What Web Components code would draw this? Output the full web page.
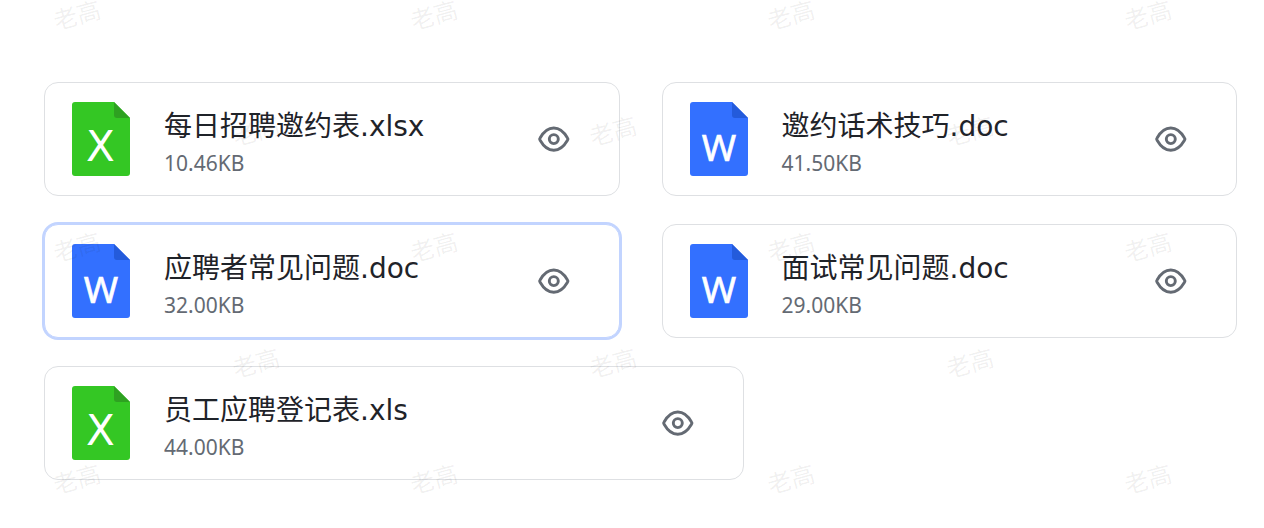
<!DOCTYPE html>
<html lang="zh-CN">
<head>
<meta charset="utf-8">
<meta name="viewport" content="width=device-width, initial-scale=1">
<title>招聘资料</title>
<style>
body { margin: 0; background: #fff; font-family: "Noto Sans", "Noto Sans CJK SC", sans-serif; color: #1f2329; }
</style>
</head>
<body>
<file-board>
  <file-row>
    <file-card name="每日招聘邀约表.xlsx" size="10.46KB" kind="sheet"></file-card>
    <file-card name="邀约话术技巧.doc" size="41.50KB" kind="word"></file-card>
  </file-row>
  <file-row>
    <file-card name="应聘者常见问题.doc" size="32.00KB" kind="word" selected></file-card>
    <file-card name="面试常见问题.doc" size="29.00KB" kind="word"></file-card>
  </file-row>
  <file-row single>
    <file-card name="员工应聘登记表.xls" size="44.00KB" kind="sheet"></file-card>
  </file-row>
</file-board>

<script>
class FileBoard extends HTMLElement {
  constructor() {
    super();
    this.attachShadow({ mode: "open" }).innerHTML = `
      <style>
        :host { display: block; position: relative; overflow: hidden; }
        main { display: flex; flex-direction: column; gap: 28px; padding: 82px 27px 48px 44px; }
      </style>
      <main><slot></slot></main>
      <water-mark text="老高"></water-mark>`;
  }
}

class FileRow extends HTMLElement {
  constructor() {
    super();
    this.attachShadow({ mode: "open" }).innerHTML = `
      <style>
        :host { display: grid; grid-template-columns: 1fr 1fr; gap: 42px; }
        :host([single]) { grid-template-columns: minmax(0, 700px); }
      </style>
      <slot></slot>`;
  }
}

class FileIcon extends HTMLElement {
  connectedCallback() {
    const sheet = this.getAttribute("kind") === "sheet";
    const fill = sheet ? "#34c724" : "#3370ff";
    const fold = sheet ? "#2ea121" : "#245bdb";
    this.attachShadow({ mode: "open" }).innerHTML = `
      <style>
        :host { display: block; flex: none; }
        svg { display: block; }
        text { font-family: "DejaVu Sans", sans-serif; fill: #fff; text-anchor: middle; }
        .word { font-family: "Noto Sans", sans-serif; stroke: #fff; stroke-width: 0.6; }
      </style>
      <svg width="58" height="74" viewBox="0 0 58 74" aria-hidden="true">
        <path d="M3 0H42L58 16V71a3 3 0 0 1-3 3H3a3 3 0 0 1-3-3V3a3 3 0 0 1 3-3Z" fill="${fill}"/>
        <path d="M42 0L58 16H45a3 3 0 0 1-3-3Z" fill="${fold}"/>
        ${sheet ? '<text x="28.5" y="59" font-size="42">X</text>' : '<text class="word" x="29" y="59" font-size="37">W</text>'}
      </svg>`;
  }
}

class FileCard extends HTMLElement {
  connectedCallback() {
    this.attachShadow({ mode: "open" }).innerHTML = `
      <style>
        :host { display: block; min-width: 0; }
        article { display: flex; align-items: center; gap: 34px; box-sizing: border-box; min-height: 114px;
          padding: 0 49px 0 27px; border: 1px solid #dee0e3; border-radius: 14px; background: #fff; }
        :host([selected]) article { border-color: #c2d4ff; box-shadow: 0 0 0 2px #c2d4ff; }
        .info { flex: 1; min-width: 0; padding-top: 2px; }
        h2 { margin: 0; font-family: "DejaVu Sans", "Noto Sans CJK SC", sans-serif; font-size: 28px; line-height: 46px; font-weight: 400; white-space: nowrap; overflow: hidden; text-overflow: ellipsis; }
        p { margin: 0; font-size: 21px; line-height: 26px; color: #646a73; }
        button { flex: none; padding: 0; border: 0; background: none; color: #646a73; cursor: pointer; }
        svg { display: block; }
      </style>
      <article>
        <file-icon kind="${this.getAttribute("kind")}"></file-icon>
        <div class="info"><h2></h2><p></p></div>
        <button type="button" aria-label="预览">
          <svg width="32" height="26" viewBox="0 0 32 26" fill="none" stroke="currentColor" stroke-width="2.9">
            <path d="M2.1 14.2Q1.3 13.1 2.1 12C6 5.1 10.500 2 15.800 2S25.500 5.100 29.500 12Q30.300 13.100 29.500 14.200C25.500 21.100 21 24.200 15.800 24.200S6 21.100 2.100 14.200Z"/>
            <circle cx="15.800" cy="13.100" r="4.500"/>
          </svg>
        </button>
      </article>`;
    this.shadowRoot.querySelector("h2").textContent = this.getAttribute("name");
    this.shadowRoot.querySelector("p").textContent = this.getAttribute("size");
  }
}

class WaterMark extends HTMLElement {
  connectedCallback() {
    const mark = `<span>${this.getAttribute("text")}</span>`;
    const rows = [4, 3, 4, 3, 4].map(n => `<div>${mark.repeat(n)}</div>`).join("");
    this.attachShadow({ mode: "open" }).innerHTML = `
      <style>
        :host { position: absolute; inset: -43px 0 0 53px; overflow: visible; pointer-events: none; user-select: none; }
        div { display: flex; height: 116px; align-items: center; }
        div:nth-of-type(even) { margin-left: 179px; }
        span { flex: none; width: 48px; margin-right: 309px; font-size: 24px; line-height: 24px; white-space: nowrap;
          color: rgba(31, 35, 41, 0.07); transform: rotate(-15deg); }
      </style>${rows}`;
    this.setAttribute("aria-hidden", "true");
  }
}

customElements.define("file-icon", FileIcon);
customElements.define("file-card", FileCard);
customElements.define("water-mark", WaterMark);
customElements.define("file-row", FileRow);
customElements.define("file-board", FileBoard);
</script>
</body>
</html>
